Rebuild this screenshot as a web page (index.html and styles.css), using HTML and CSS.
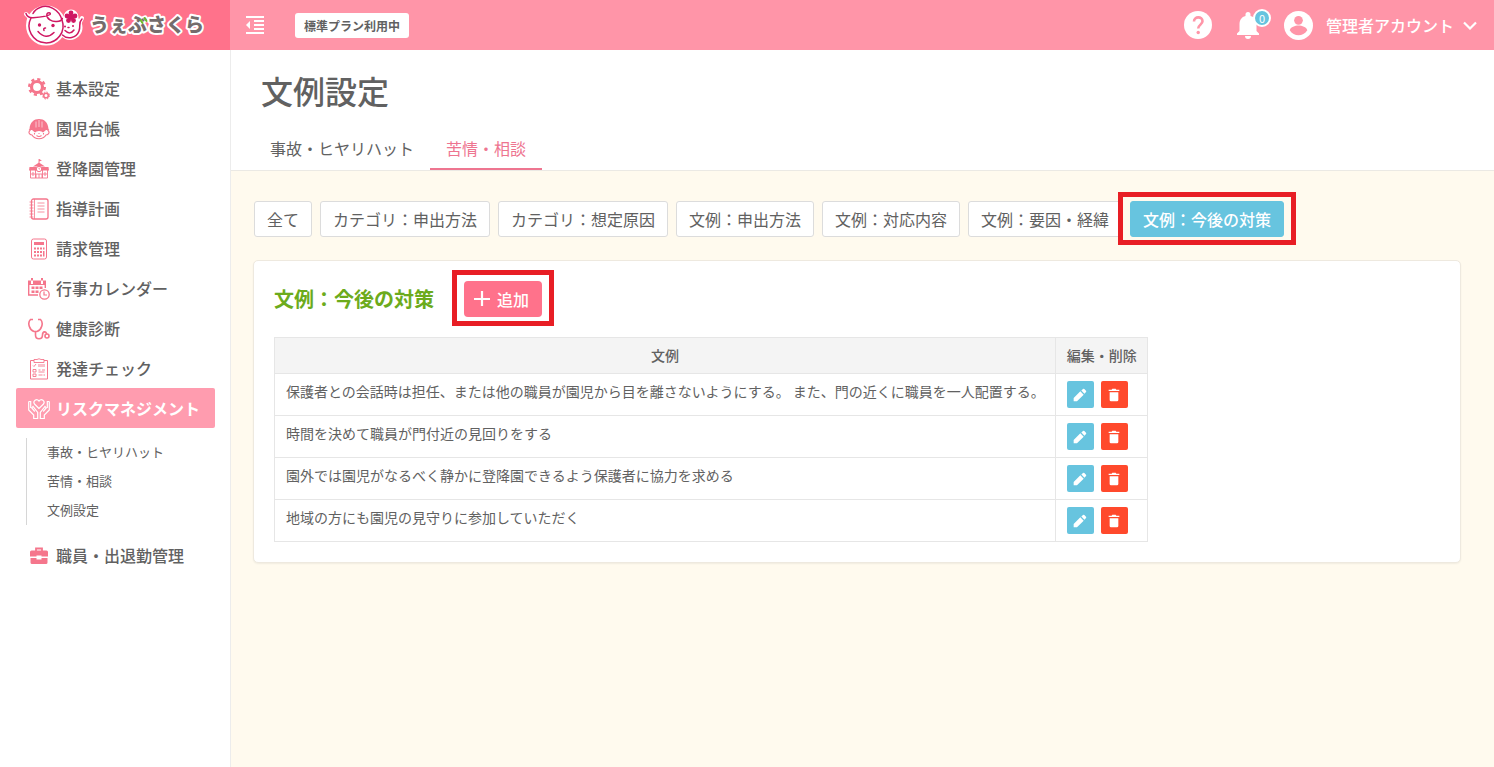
FILE: index.html
```html
<!DOCTYPE html>
<html lang="ja">
<head>
<meta charset="utf-8">
<meta name="viewport" content="width=device-width, initial-scale=1">
<title>文例設定</title>
<link rel="stylesheet" href="styles.css">
</head>
<body>
<svg class="defs" aria-hidden="true">
  <symbol id="pencil" viewBox="0 0 24 24"><path d="M2.500 16.500V21.500h5L17.500 11.500 12.500 6.500zM21 7.500a1.500 1.500 0 0 0 0-2l-2.500-2.500a1.500 1.500 0 0 0-2 0L14 5.300 18.700 10z" fill="currentColor"/></symbol>
  <symbol id="trash" viewBox="0 0 24 24"><path d="M5.500 8h13v11.500a2 2 0 0 1-2 2h-9a2 2 0 0 1-2-2zM4 4h4.500l1-1.500h5l1 1.500H20v2H4z" fill="currentColor"/></symbol>
</svg>
<header class="topbar">
  <a class="brand" href="#" aria-label="うぇぶさくら">
    <svg width="190" height="50" viewBox="0 0 190 50">
      <g fill="#fff" stroke="#fff" stroke-width="4" stroke-linejoin="round" stroke-linecap="round">
        <circle cx="46" cy="25.500" r="18"/><circle cx="70" cy="27.500" r="10.500"/><circle cx="71" cy="17" r="5.500"/><path d="M26 14l4 4M82 18l-3 6"/>
      </g>
      <g fill="none" stroke="#cf1762" stroke-width="1.500" stroke-linecap="round">
        <path d="M26 13.500c1 3 3 4.500 7 4.200 7-.5 14-1 17-3.200 1.500-2-3-3-3.200.5 0 4 5 7 10 6.500 3 0 5-1.500 5.500-3"/>
        <path d="M31 18A17 17 0 1 0 62 20C59 9 48 4 40 7.500q-5 2-7 6"/>
        <path d="M62.500 35c5 5 14 3 16.500-4 2-5-1-8 3-12"/>
        <path d="M38 31.500q8 9 16 1M65 30.500q5 5 9-.5M44 30.500q-1-2.500 1.500-2.500M68 27.500h1"/>
      </g>
      <g fill="#cf1762"><circle cx="39.500" cy="25" r="1.700"/><circle cx="53" cy="25.500" r="1.700"/><circle cx="65" cy="26.500" r="1"/><circle cx="73" cy="26" r="1"/>
        <circle cx="71" cy="13" r="2.400"/><circle cx="75" cy="16" r="2.400"/><circle cx="73.500" cy="20.500" r="2.400"/><circle cx="68.500" cy="20.500" r="2.400"/><circle cx="67" cy="16" r="2.400"/><circle cx="71" cy="17" r="3"/></g>
      <text class="brand-text" x="90" y="32">うぇぶさくら</text>
      <path d="M140.500 20l2 3M144.500 18l2 3" stroke="#6dbb2b" stroke-width="2" stroke-linecap="round"/>
    </svg>
  </a>
  <button class="icon-button fold" aria-label="メニューを閉じる">
    <svg width="20" height="20" viewBox="0 0 20 20" fill="currentColor"><path d="M1 1h18v2H1zM9 5h10v2H9zM9 9h10v2H9zM9 13h10v2H9zM1 17h18v2H1zM1 10l4-4v8z"/></svg>
  </button>
  <span class="plan">標準プラン利用中</span>
  <div class="tools">
    <button class="icon-button" aria-label="ヘルプ">
      <svg width="28" height="28" viewBox="0 0 28 28"><circle cx="14" cy="14" r="14" fill="#fff"/><path d="M10 10.500c0-5.500 8.500-5.500 8.500-.2 0 3.200-4.300 3.500-4.300 7.200" fill="none" stroke="#ff95a8" stroke-width="2.600"/><circle cx="14.200" cy="21.500" r="1.700" fill="#ff95a8"/></svg>
    </button>
    <button class="icon-button bell" aria-label="お知らせ">
      <svg width="22" height="28" viewBox="0 0 22 28" fill="currentColor"><path d="M0 24v-1.500L2.500 20v-7c0-4 2-7 6-8V3.500a2.500 2.500 0 0 1 5 0V5c4 1 6 4 6 8v7l2.500 2.500V24zM8 25h6a3 3 0 0 1-6 0z"/></svg>
      <span class="count">0</span>
    </button>
    <button class="icon-button account">
      <svg width="29" height="29" viewBox="0 0 28 28"><circle cx="14" cy="14" r="14" fill="#fff"/><circle cx="14" cy="9" r="4.200" fill="#ff95a8"/><path d="M5.500 18.500c1-3 5-4.500 8.500-4.500s7.500 1.500 8.500 4.500c-4 6.500-13 6.500-17 0z" fill="#ff95a8"/></svg>
      <span>管理者アカウント</span>
      <svg width="14" height="9" viewBox="0 0 14 9"><path d="M1 1.500L7 7.500l6-6" fill="none" stroke="#fff" stroke-width="2.200"/></svg>
    </button>
  </div>
</header>
<div class="shell">
  <nav class="sidebar" aria-label="メインメニュー">
    <a class="item" href="#"><svg class="ico" viewBox="0 0 22 22"><circle cx="9" cy="9" r="5.500" fill="none" stroke="currentColor" stroke-width="3.200"/><circle cx="9" cy="9" r="7.800" fill="none" stroke="currentColor" stroke-width="2.400" stroke-dasharray="3.100 3.025"/><circle cx="18" cy="17.500" r="2.300" fill="none" stroke="currentColor" stroke-width="1.600"/><circle cx="18" cy="17.500" r="3.500" fill="none" stroke="currentColor" stroke-width="1" stroke-dasharray="1.500 1.250"/></svg>基本設定</a>
    <a class="item" href="#"><svg class="ico" viewBox="0 0 22 22"><path d="M1.500 11C2 4 6 1 11 1S20 4 20.500 11l.8 1H.7z" fill="currentColor"/><path d="M8 3.500v6M11 2v7M14 3.500v6" stroke="#fff" stroke-width=".6"/><path d="M2.500 12c-3 2-1 5 1.500 5 3 5 11 5 14 0 2.500 0 4.500-3 1.500-5M8.500 17.500q2.500 2 5 0M6.500 15v1.500M15.500 15v1.500M10.500 15.500h1" fill="none" stroke="currentColor" stroke-width="1.100"/><path d="M4 12h14l-3 2.500q-1-1.500-4-1.500t-4 1.500z" fill="currentColor"/></svg>園児台帳</a>
    <a class="item" href="#"><svg class="ico" viewBox="0 0 22 22"><path d="M11 6V1l3 1.500-3 1M5 8.500l6-4 6 4zM1.500 9h19l.5 3.500H1z" fill="currentColor"/><path d="M11 1v5M2.500 12v8h17v-8M8 20v-4h6v4M11 16v4M7.500 11v9M14.500 11v9M4 15h2v2H4zM16 15h2v2h-2z" fill="none" stroke="currentColor" stroke-width=".9"/><circle cx="11" cy="11" r="2.700" fill="#fff" stroke="currentColor"/><path d="M11 9.500V11h1" fill="none" stroke="currentColor" stroke-width=".7"/></svg>登降園管理</a>
    <a class="item" href="#"><svg class="ico" viewBox="0 0 22 22" fill="none" stroke="currentColor"><rect x="3.500" y="1" width="16.500" height="20" rx="2" stroke-width="1.300"/><path d="M6.500 1v20M1.500 4h4M1.500 7h4M1.500 10h4M1.500 13h4M1.500 16h4M1.500 19h4M9.500 5h7M9.500 8h7M9.500 11h7M9.500 14h7" stroke-width=".8"/></svg>指導計画</a>
    <a class="item" href="#"><svg class="ico" viewBox="0 0 22 22"><rect x="3.500" y="1" width="15" height="20" rx="2" fill="none" stroke="currentColor"/><path d="M6 4h10v3H6zM6 9.500h2v2H6zM9 9.500h2v2H9zM12 9.500h2v2h-2zM15 9.500h1.500v2H15zM6 13h2v2H6zM9 13h2v2H9zM12 13h2v2h-2zM15 13h1.500v5.500H15zM6 16.500h2v2H6zM9 16.500h2v2H9zM12 16.500h2v2h-2z" fill="currentColor"/></svg>請求管理</a>
    <a class="item" href="#"><svg class="ico" viewBox="0 0 22 22"><path d="M0 2.500h18V7H0zM3 6h2V0H3zM13 6h2V0h-2zM3.500 8.500h3v2.500h-3zM7.500 8.500h3v2.500h-3zM11.500 8.500h3v2.500h-3zM3.500 12.500h3V15h-3zM7.500 12.500h3V15h-3z" fill="currentColor"/><path d="M.7 4v13H10M17.300 4v6" fill="none" stroke="currentColor" stroke-width="1.400"/><circle cx="16.500" cy="16.500" r="4.700" fill="#fff" stroke="currentColor" stroke-width="1.300"/><path d="M16 13.500V17h3" fill="none" stroke="currentColor" stroke-width="1.200"/></svg>行事カレンダー</a>
    <a class="item" href="#"><svg class="ico" viewBox="0 0 22 22" fill="none" stroke="currentColor" stroke-width="1.600"><path d="M5 1.500H2.500C-1 5 1.500 12 6 13.500h3C13.500 12 16 5 12.500 1.500H10M7.500 14v3c0 5 7 5 7 0 0-4 4-4 4-1"/><circle cx="19" cy="18" r="2"/></svg>健康診断</a>
    <a class="item" href="#"><svg class="ico" viewBox="0 0 22 22" fill="none" stroke="currentColor"><path d="M6 2.500H2.500v18.500h17V2.500H16"/><path d="M6 1.500h3q2-1.500 4 0h3v3H6zM5 7.500l1 1 2-2.500M5 11.500h3v2.500H5zM5 16h3v2.500H5zM10.500 12h2M14 12h3M10.500 14h6M10.500 17h4M15.500 17H17" stroke-width=".9"/><path d="M10 6h7v3h-7z" fill="currentColor" stroke="none" opacity=".45"/></svg>発達チェック</a>
    <a class="item active" href="#" aria-current="page"><svg class="ico" viewBox="0 0 22 22" fill="none" stroke="currentColor" stroke-width="1.200"><path d="M11 10.500L6.500 6c-2-3 2-6 4.500-3 2.500-3 6.500 0 4.500 3zM.7 3.500v8.500l5 5v3.500h4v-6L5 8.500 3.800 10l3 3.500M.7 3.500h2V10M21.300 3.500v8.500l-5 5v3.500h-4v-6L17 8.500l1.200 1.500-3 3.500M21.300 3.500h-2V10"/></svg>リスクマネジメント</a>
    <div class="submenu">
      <a href="#">事故・ヒヤリハット</a>
      <a href="#">苦情・相談</a>
      <a href="#">文例設定</a>
    </div>
    <a class="item" href="#"><svg class="ico" viewBox="0 0 22 22"><path d="M8 6V3.500h6V6" fill="none" stroke="currentColor" stroke-width="1.800"/><path d="M3.500 5.500h15A1.500 1.500 0 0 1 20 7v4.500h-6.500v-1h-5v1H2V7a1.500 1.500 0 0 1 1.500-1.500zM2.500 13h6v1.500h5V13h6v4.500a1.500 1.500 0 0 1-1.500 1.500H4a1.500 1.500 0 0 1-1.500-1.500z" fill="currentColor"/></svg>職員・出退勤管理</a>
  </nav>
  <main class="main">
    <div class="page-head">
      <h1>文例設定</h1>
      <div class="tabs">
        <a href="#">事故・ヒヤリハット</a>
        <a class="current" href="#">苦情・相談</a>
      </div>
    </div>
    <div class="content">
      <div class="filters">
        <button>全て</button>
        <button>カテゴリ：申出方法</button>
        <button>カテゴリ：想定原因</button>
        <button>文例：申出方法</button>
        <button>文例：対応内容</button>
        <button>文例：要因・経緯</button>
        <button class="selected marked">文例：今後の対策</button>
      </div>
      <section class="card">
        <div class="card-head">
          <h2>文例：今後の対策</h2>
          <button class="add marked"><svg width="16" height="16" viewBox="0 0 16 16"><path d="M8 0v15M0 8h16" stroke="currentColor" stroke-width="2.200"/></svg>追加</button>
        </div>
        <table>
          <thead><tr><th>文例</th><th>編集・削除</th></tr></thead>
          <tbody>
            <tr><td>保護者との会話時は担任、または他の職員が園児から目を離さないようにする。 また、門の近くに職員を一人配置する。</td><td><div class="actions"><button class="edit" aria-label="編集"><svg><use href="#pencil"/></svg></button><button class="delete" aria-label="削除"><svg><use href="#trash"/></svg></button></div></td></tr>
            <tr><td>時間を決めて職員が門付近の見回りをする</td><td><div class="actions"><button class="edit" aria-label="編集"><svg><use href="#pencil"/></svg></button><button class="delete" aria-label="削除"><svg><use href="#trash"/></svg></button></div></td></tr>
            <tr><td>園外では園児がなるべく静かに登降園できるよう保護者に協力を求める</td><td><div class="actions"><button class="edit" aria-label="編集"><svg><use href="#pencil"/></svg></button><button class="delete" aria-label="削除"><svg><use href="#trash"/></svg></button></div></td></tr>
            <tr><td>地域の方にも園児の見守りに参加していただく</td><td><div class="actions"><button class="edit" aria-label="編集"><svg><use href="#pencil"/></svg></button><button class="delete" aria-label="削除"><svg><use href="#trash"/></svg></button></div></td></tr>
          </tbody>
        </table>
      </section>
    </div>
  </main>
</div>
</body>
</html>
```
FILE: styles.css
```css
* { box-sizing: border-box; }
body {
  margin: 0;
  min-height: 100vh;
  display: flex;
  flex-direction: column;
  font-family: "Noto Sans CJK JP", sans-serif;
  font-size: 16px;
  line-height: 24px;
  color: #616161;
  background: #fff;
}
a { color: inherit; text-decoration: none; }
button { font: inherit; color: inherit; cursor: pointer; }
svg { display: block; flex: none; }
.defs { position: absolute; width: 0; height: 0; }

.topbar { display: flex; align-items: center; height: 50px; background: #ff95a8; color: #fff; }
.brand { width: 230px; height: 50px; background: #ff728b; }
.brand svg { overflow: visible; }
.brand-text {
  font-size: 19px;
  font-weight: 900;
  fill: #756c6c;
  stroke: #fff;
  stroke-width: 4px;
  stroke-linejoin: round;
  paint-order: stroke;
}
.icon-button { display: flex; align-items: center; padding: 0; border: 0; background: none; color: #fff; }
.fold { margin-left: 15px; }
.plan {
  margin-left: 30px;
  padding: 1px 9px 0;
  border-radius: 3px;
  background: #fff;
  color: #616161;
  font-size: 12px;
  font-weight: 700;
}
.tools { display: flex; align-items: center; gap: 25px; margin-left: auto; padding-right: 17px; }
.bell { position: relative; }
.count {
  position: absolute;
  top: -2px;
  left: 16px;
  width: 18px;
  height: 18px;
  border: 2px solid #fff;
  border-radius: 50%;
  background: #67c4df;
  font-size: 11px;
  line-height: 14px;
  text-align: center;
}
.account { gap: 13px; font-weight: 500; }
.account svg:last-child { margin-left: -4px; }

.shell { display: flex; flex: 1; }
.sidebar { flex: none; width: 231px; padding: 18px 15px 20px 16px; border-right: 1px solid #ececec; font-weight: 500; }
.item { display: flex; align-items: center; gap: 6px; height: 40px; padding-left: 12px; border-radius: 2px; }
.ico { width: 22px; height: 22px; margin-top: 2px; color: #f5768c; }
.item.active { background: #ff9caf; color: #fff; font-weight: 700; }
.active .ico { color: #fff; }
.submenu {
  display: flex;
  flex-direction: column;
  margin: 10px 0 10px 10px;
  padding-left: 20px;
  border-left: 1px solid #d6d6d6;
  font-size: 13px;
  font-weight: 400;
}
.submenu a { height: 29px; line-height: 27px; }

.main { flex: 1; min-width: 0; display: flex; flex-direction: column; }
.page-head { padding: 18px 23px 0; border-bottom: 1px solid #ebe9e4; }
h1 { margin: 0; padding-left: 7px; font-size: 32px; font-weight: 500; line-height: 44px; }
.tabs { display: flex; margin-top: 16px; }
.tabs a { height: 42px; padding: 8px 16px; }
.tabs .current { color: #ee7590; border-bottom: 2px solid #ee7590; }
.content { flex: 1; padding: 30px 33px 30px 22px; background: #fffaee; }
.filters { display: flex; flex-wrap: wrap; gap: 8px; padding-left: 1px; }
.filters button {
  height: 36px;
  padding: 0 12px;
  border: 1px solid #dcdcdc;
  border-radius: 3px;
  background: #fff;
  white-space: nowrap;
}
.filters .selected { border-color: #67c4df; background: #67c4df; color: #fff; font-weight: 500; }
.marked { position: relative; }
.marked::after {
  content: "";
  position: absolute;
  inset: -11px -12px -9px;
  border: 5px solid #e81e25;
  pointer-events: none;
}
.filters .marked::after { inset: -10px -13px -9px; }
.card {
  margin-top: 23px;
  padding: 20px;
  border: 1px solid #eee9df;
  border-radius: 5px;
  background: #fff;
  box-shadow: 0 1px 2px rgba(0, 0, 0, 0.06);
}
.card-head { display: flex; align-items: center; gap: 30px; margin-bottom: 20px; }
h2 { margin: 0; font-size: 20px; font-weight: 700; color: #6cab1c; }
.add {
  display: flex;
  align-items: center;
  gap: 7px;
  height: 36px;
  padding: 0 13px 0 10px;
  border: 0;
  border-radius: 4px;
  background: #ff728b;
  color: #fff;
  font-weight: 500;
}
table { border-collapse: collapse; font-size: 14px; line-height: 20px; }
th, td { border: 1px solid #e6e6e6; padding: 7px 10px 7px 11px; text-align: left; vertical-align: top; }
th { padding: 7px 10px 8px; background: #f4f4f4; font-weight: 500; text-align: center; white-space: nowrap; }
th:last-child { padding-left: 11px; }
.actions { display: flex; gap: 7px; }
.actions button { display: grid; place-items: center; width: 27px; height: 27px; padding: 0; border: 0; border-radius: 2px; color: #fff; }
.actions svg { width: 16px; height: 16px; }
.actions .edit { background: #67c4df; }
.actions .delete { background: #ff492c; }
```
